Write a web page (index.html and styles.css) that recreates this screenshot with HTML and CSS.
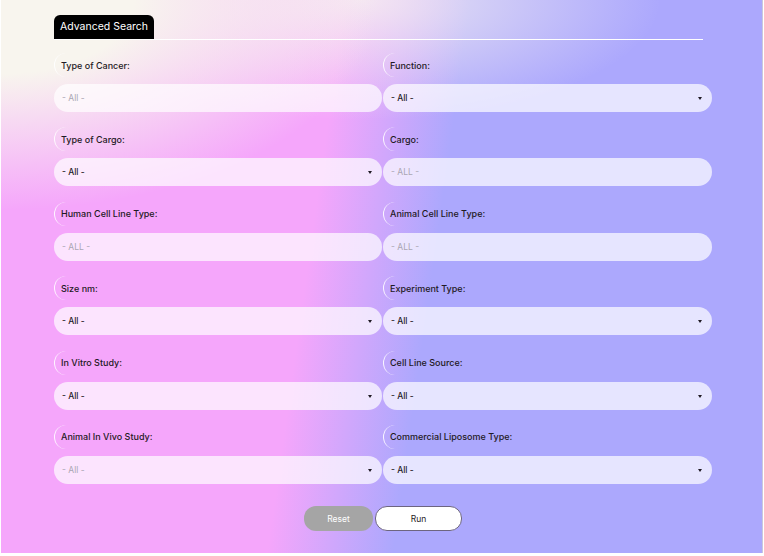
FILE: index.html
```html
<!DOCTYPE html>
<html lang="en">
<head>
  <meta charset="UTF-8" />
  <title>Advanced Search</title>
  <link rel="stylesheet" href="styles.css">
</head>
<body>
  <div class="panel">
    <div class="tabs">
      <div class="tab">Advanced Search</div>
    </div>

    <form class="search-form">
      <div class="field">
        <label>Type of Cancer:</label>
        <input type="text" placeholder="- All -" />
      </div>
      <div class="field">
        <label>Function:</label>
        <div class="select"><span>- All -</span></div>
      </div>

      <div class="field">
        <label>Type of Cargo:</label>
        <div class="select"><span>- All -</span></div>
      </div>
      <div class="field">
        <label>Cargo:</label>
        <input type="text" placeholder="- ALL -" />
      </div>

      <div class="field">
        <label>Human Cell Line Type:</label>
        <input type="text" placeholder="- ALL -" />
      </div>
      <div class="field">
        <label>Animal Cell Line Type:</label>
        <input type="text" placeholder="- ALL -" />
      </div>

      <div class="field">
        <label>Size nm:</label>
        <div class="select"><span>- All -</span></div>
      </div>
      <div class="field">
        <label>Experiment Type:</label>
        <div class="select"><span>- All -</span></div>
      </div>

      <div class="field">
        <label>In Vitro Study:</label>
        <div class="select"><span>- All -</span></div>
      </div>
      <div class="field">
        <label>Cell Line Source:</label>
        <div class="select"><span>- All -</span></div>
      </div>

      <div class="field">
        <label>Animal In Vivo Study:</label>
        <div class="select muted"><span>- All -</span></div>
      </div>
      <div class="field">
        <label>Commercial Liposome Type:</label>
        <div class="select"><span>- All -</span></div>
      </div>

      <div class="actions">
        <button type="reset" class="btn reset">Reset</button>
        <button type="button" class="btn run">Run</button>
      </div>
    </form>
  </div>
</body>
</html>
```

FILE: styles.css
```css
html, body {
  margin: 0;
  height: 100%;
  background: #fff;
}

body {
  font-family: Inter, "DejaVu Sans", sans-serif;
  color: #1f1a24;
}

.panel {
  box-sizing: border-box;
  width: 762px;
  height: 553px;
  margin-left: 1px;
  padding: 15px 53px 0;
  border-right: 1px solid #c9c7dc;
  background:
    radial-gradient(ellipse 380px 210px at 0 0, #f8f5ee 35%, rgba(248, 245, 238, 0) 100%),
    radial-gradient(ellipse 300px 120px at 360px 0, rgba(246, 241, 240, 0.85) 0%, rgba(246, 241, 240, 0) 100%),
    linear-gradient(98deg, #f5a6fb 0%, #f5a6fb 41%, #aca8fd 56%, #aca8fd 100%);
}

.tabs {
  display: flex;
  width: 649px;
  border-bottom: 1px solid #fff;
}

.tab {
  height: 24px;
  line-height: 24px;
  padding: 0 6px;
  background: #000;
  color: #fff;
  font-size: 10.5px;
  border-radius: 6px 6px 0 0;
}

.search-form {
  display: grid;
  grid-template-columns: 328px 329px;
  column-gap: 1px;
  margin-top: 13px;
}

.field {
  display: flex;
  flex-direction: column;
  margin-bottom: 15.4px;
}

.field label {
  display: flex;
  align-items: center;
  height: 24px;
  margin-bottom: 7px;
  padding-left: 6px;
  border-left: 1px solid rgba(255, 255, 255, 0.9);
  border-radius: 12px 0 0 12px;
  font-size: 9px;
  font-weight: 500;
}

.field input,
.select {
  box-sizing: border-box;
  height: 28px;
  margin: 0;
  padding: 0 8px;
  border: 0;
  border-radius: 14px;
  background: rgba(255, 255, 255, 0.7);
  font-family: inherit;
  font-size: 8.5px;
  color: #1f1a24;
  outline: none;
}

.field input::placeholder {
  color: #aaa6b2;
}

.select {
  position: relative;
  display: flex;
  align-items: center;
  font-weight: 500;
}

.select::after {
  content: "";
  position: absolute;
  right: 10px;
  top: 13px;
  border-left: 2.5px solid transparent;
  border-right: 2.5px solid transparent;
  border-top: 3px solid #1f1a24;
}

.select.muted {
  color: #aaa6b2;
  font-weight: 400;
}

.actions {
  grid-column: 1 / 3;
  display: flex;
  justify-content: center;
  gap: 2px;
  margin-top: 7px;
}

.btn {
  height: 25px;
  border-radius: 12px;
  font-family: inherit;
  font-size: 8.5px;
}

.reset {
  width: 69px;
  border: 0;
  background: #a5a5a5;
  color: #fff;
}

.run {
  width: 87px;
  border: 1px solid #6d6580;
  background: #fff;
  color: #1f1a24;
}
```
